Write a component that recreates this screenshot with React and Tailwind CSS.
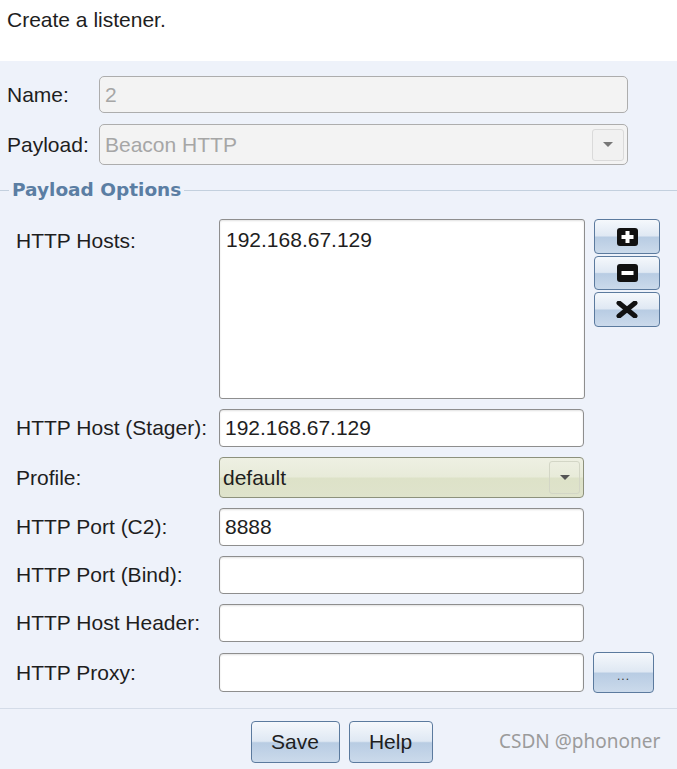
import React from "react";

const blueBtn =
  "border border-[#5b7a9e] rounded-[4px] bg-[linear-gradient(to_bottom,#f5f8fc_0%,#dfe8f3_48%,#b8cce3_52%,#cbdaeb_100%)] flex items-center justify-center";

function Field({ value = "", className = "" }) {
  return (
    <div
      className={`h-[38px] w-[365px] bg-white border border-[#8e8e8e] rounded-[4px] shadow-[inset_0_1px_2px_rgba(0,0,0,0.12)] flex items-center pl-[5px] ${className}`}
    >
      {value}
    </div>
  );
}

function Arrow({ color = "#6b6b6b" }) {
  return (
    <svg width="10" height="6" viewBox="0 0 10 6">
      <path d="M0 0 L10 0 L5 5 Z" fill={color} />
    </svg>
  );
}

function PlusIcon() {
  return (
    <svg width="21" height="18" viewBox="0 0 21 18">
      <rect x="0" y="0" width="21" height="18" rx="3" fill="#111" />
      <rect x="8.5" y="3" width="4" height="12" fill="#fff" />
      <rect x="4.5" y="7" width="12" height="4" fill="#fff" />
    </svg>
  );
}

function MinusIcon() {
  return (
    <svg width="21" height="18" viewBox="0 0 21 18">
      <rect x="0" y="0" width="21" height="18" rx="3" fill="#111" />
      <rect x="4.5" y="7" width="12" height="4" fill="#fff" />
    </svg>
  );
}

function XIcon() {
  return (
    <svg width="22" height="17" viewBox="0 0 22 17">
      <path d="M3 2 L19 15 M19 2 L3 15" stroke="#111" strokeWidth="5" strokeLinecap="round" />
    </svg>
  );
}

export default function App() {
  const rows = [
    { label: "HTTP Host (Stager):", value: "192.168.67.129" },
  ];

  return (
    <div className="w-[677px] h-[769px] overflow-hidden bg-white flex flex-col font-['Liberation_Sans',Arial,sans-serif] text-[21px] text-[#1e1e1e] relative">
      {/* header text */}
      <div className="h-[61px] pl-[7px] pt-[8px] leading-[24px]">Create a listener.</div>

      {/* dialog body */}
      <div className="flex-1 bg-[#eef2fa] flex flex-col">
        <div className="pl-[7px] pt-[15px] flex flex-col gap-[11px]">
          <div className="flex items-center">
            <div className="w-[92px]">Name:</div>
            <div className="w-[529px] h-[37px] bg-[#f3f3f3] border border-[#adadad] rounded-[5px] flex items-center pl-[5px] text-[#a6a6a6]">
              2
            </div>
          </div>
          <div className="flex items-center">
            <div className="w-[92px]">Payload:</div>
            <div className="w-[529px] h-[41px] bg-[#f3f3f3] border border-[#adadad] rounded-[5px] flex items-center pl-[5px] pr-[3px] text-[#a6a6a6]">
              <span className="flex-1">Beacon HTTP</span>
              <div className="w-[32px] h-[32px] border border-[#dadada] rounded-[3px] bg-[#f1f1f1] flex items-center justify-center">
                <Arrow color="#777" />
              </div>
            </div>
          </div>
        </div>

        {/* legend */}
        <div className="flex items-center mt-[13px] h-[24px]">
          <div className="w-[9px] h-px bg-[#c3d0de]" />
          <div className="px-[3px] font-['DejaVu_Sans',sans-serif] font-bold text-[18.5px] text-[#5b7ea3] leading-[24px]">
            Payload Options
          </div>
          <div className="flex-1 h-px bg-[#c3d0de]" />
        </div>

        {/* options */}
        <div className="pl-[16px] pt-[17px] flex flex-col gap-[10px]">
          <div className="flex items-start">
            <div className="w-[203px] pt-[10px] leading-[24px]">HTTP Hosts:</div>
            <div className="w-[366px] h-[180px] bg-white border border-[#8e8e8e] rounded-[3px] shadow-[inset_0_1px_2px_rgba(0,0,0,0.12)] pl-[6px] pt-[8px] leading-[24px]">
              192.168.67.129
            </div>
            <div className="ml-[9px] flex flex-col gap-[2px]">
              <button className={`${blueBtn} w-[66px] h-[35px]`}>
                <PlusIcon />
              </button>
              <button className={`${blueBtn} w-[66px] h-[34px]`}>
                <MinusIcon />
              </button>
              <button className={`${blueBtn} w-[66px] h-[35px]`}>
                <XIcon />
              </button>
            </div>
          </div>

          {rows.map((r) => (
            <div key={r.label} className="flex items-center">
              <div className="w-[203px]">{r.label}</div>
              <Field value={r.value} />
            </div>
          ))}

          <div className="flex items-center">
            <div className="w-[203px]">Profile:</div>
            <div className="w-[365px] h-[41px] border border-[#8d917c] rounded-[4px] bg-[linear-gradient(to_bottom,#eef0e3_0%,#e8ebd9_48%,#dde2c8_52%,#dfe3cc_100%)] flex items-center pl-[3px] pr-[3px]">
              <span className="flex-1">default</span>
              <div className="w-[31px] h-[33px] border border-[#d3d6c6] rounded-[3px] flex items-center justify-center">
                <Arrow color="#555" />
              </div>
            </div>
          </div>

          <div className="flex items-center">
            <div className="w-[203px]">HTTP Port (C2):</div>
            <Field value="8888" className="pl-[3px]" />
          </div>
          <div className="flex items-center">
            <div className="w-[203px]">HTTP Port (Bind):</div>
            <Field />
          </div>
          <div className="flex items-center">
            <div className="w-[203px]">HTTP Host Header:</div>
            <Field />
          </div>
          <div className="flex items-center">
            <div className="w-[203px]">HTTP Proxy:</div>
            <Field className="h-[39px]" />
            <button className={`${blueBtn} ml-[9px] w-[61px] h-[41px] text-[12px] text-[#333] tracking-[1px] pt-[6px]`}>
              ...
            </button>
          </div>
        </div>

        <div className="mt-[15px] h-px bg-[#d4dce8]" />

        <div className="flex justify-center gap-[9px] pt-[12px] pl-[6px]">
          <button className={`${blueBtn} w-[89px] h-[42px]`}>Save</button>
          <button className={`${blueBtn} w-[84px] h-[42px]`}>Help</button>
        </div>
      </div>

      {/* watermark */}
      <div className="absolute left-[499px] top-[729px] font-['Noto_Sans',sans-serif] text-[19px] text-[#9b9b9b] leading-[24px]">
        CSDN @phononer
      </div>
    </div>
  );
}
